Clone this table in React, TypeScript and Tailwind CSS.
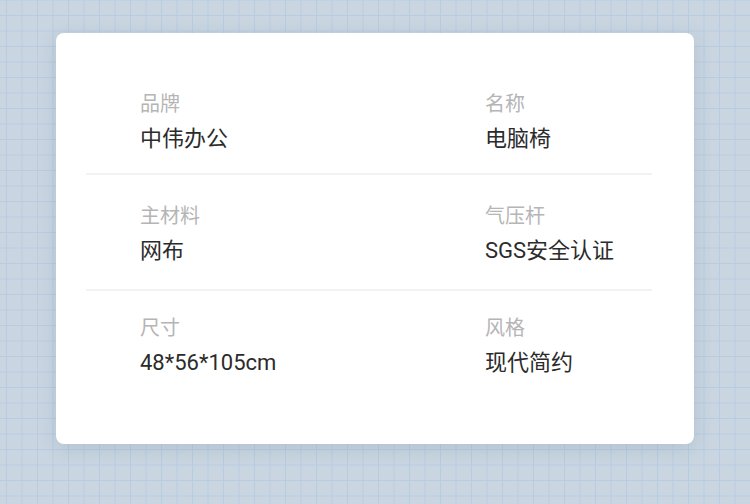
import React from "react";

type Spec = { label: string; value: string };

const rows: [Spec, Spec][] = [
  [
    { label: "品牌", value: "中伟办公" },
    { label: "名称", value: "电脑椅" },
  ],
  [
    { label: "主材料", value: "网布" },
    { label: "气压杆", value: "SGS安全认证" },
  ],
  [
    { label: "尺寸", value: "48*56*105cm" },
    { label: "风格", value: "现代简约" },
  ],
];

function Cell({ label, value }: Spec) {
  return (
    <div className="flex flex-col gap-[10px]">
      <span className="text-[20px] leading-[24px] text-[#b5b5b5]">{label}</span>
      <span
        className="text-[22px] leading-[28px] text-[#2b2b2b] whitespace-nowrap"
        style={{ fontFamily: 'Roboto, "Noto Sans CJK SC", sans-serif' }}
      >
        {value}
      </span>
    </div>
  );
}

export default function App() {
  return (
    <div
      className="h-[504px] w-full overflow-hidden bg-[#c9d6e1] bg-[linear-gradient(to_right,#b8cce0_1px,transparent_1px),linear-gradient(to_bottom,#b8cce0_1px,transparent_1px)] bg-[size:15.5px_15.5px] bg-[position:6px_15px] pt-[33px] pl-[56px]"
      style={{ fontFamily: '"Noto Sans CJK SC", "Noto Sans", sans-serif' }}
    >
      <div className="w-[638px] h-[411px] rounded-[8px] bg-white shadow-[0_4px_18px_rgba(70,100,130,0.18)] pt-[58px] pl-[30px] pr-[42px]">
        {rows.map((pair, i) => (
          <div key={i}>
            {i > 0 && <div className="h-[2px] bg-[#f2f2f2]" />}
            <div
              className={`grid grid-cols-[345px_1fr] pl-[54px] ${
                i === 0 ? "pb-[20px]" : i === 1 ? "pt-[28px] pb-[24px]" : "pt-[24px]"
              }`}
            >
              <Cell {...pair[0]} />
              <Cell {...pair[1]} />
            </div>
          </div>
        ))}
      </div>
    </div>
  );
}
